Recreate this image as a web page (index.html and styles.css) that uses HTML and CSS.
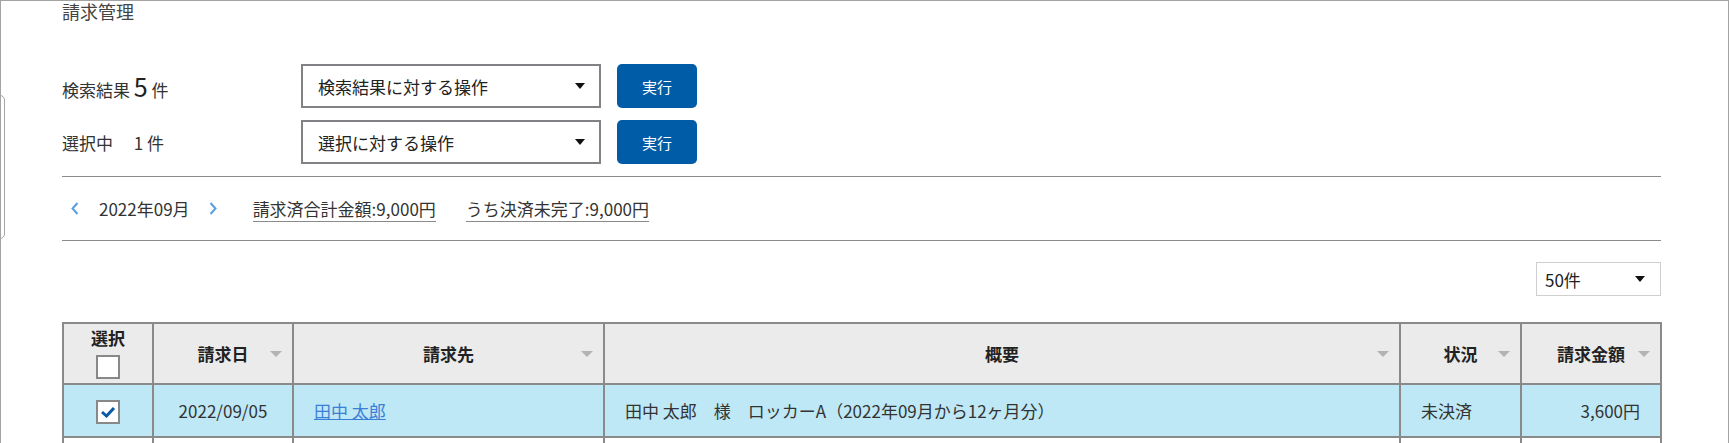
FILE: index.html
```html
<!DOCTYPE html>
<html lang="ja">
<head>
    <meta charset="UTF-8">
    <title>請求管理</title>
    <link rel="stylesheet" href="styles.css">
</head>
<body>
    <div class="frame">
        <div class="side-tab"></div>
        <div class="content">
            <h1 class="page-title">請求管理</h1>

            <div class="ops">
                <div class="op-row">
                    <div class="op-label">検索結果 <span class="count">5</span> 件</div>
                    <div class="op-select">
                        <span>検索結果に対する操作</span>
                        <span class="caret"></span>
                    </div>
                    <button class="btn">実行</button>
                </div>
                <div class="op-row">
                    <div class="op-label">選択中　 1 件</div>
                    <div class="op-select">
                        <span>選択に対する操作</span>
                        <span class="caret"></span>
                    </div>
                    <button class="btn">実行</button>
                </div>
            </div>

            <div class="summary">
                <svg class="chev" width="8" height="13" viewBox="0 0 8 13"><polyline points="6.5,1 1.5,6.5 6.5,12" fill="none" stroke="#5b9ee0" stroke-width="2"/></svg>
                <span class="month">2022年09月</span>
                <svg class="chev" width="8" height="13" viewBox="0 0 8 13"><polyline points="1.5,1 6.5,6.5 1.5,12" fill="none" stroke="#5b9ee0" stroke-width="2"/></svg>
                <span class="total first">請求済合計金額:9,000円</span>
                <span class="total">うち決済未完了:9,000円</span>
            </div>

            <div class="toolbar">
                <div class="per-page">
                    <span>50件</span>
                    <span class="caret"></span>
                </div>
            </div>

            <table class="bills">
                <colgroup>
                    <col style="width: 90px">
                    <col style="width: 140px">
                    <col style="width: 311px">
                    <col style="width: 796px">
                    <col style="width: 121px">
                    <col style="width: 140px">
                </colgroup>
                <thead>
                    <tr>
                        <th class="select-col">
                            <div>選択</div>
                            <span class="check"></span>
                        </th>
                        <th>請求日<span class="sort"></span></th>
                        <th>請求先<span class="sort"></span></th>
                        <th>概要<span class="sort"></span></th>
                        <th>状況<span class="sort"></span></th>
                        <th>請求金額<span class="sort"></span></th>
                    </tr>
                </thead>
                <tbody>
                    <tr class="selected">
                        <td class="center">
                            <span class="check">
                                <svg width="16" height="12" viewBox="0 0 16 12"><polyline points="2,6 6.5,10 14,2" fill="none" stroke="#0b5aa6" stroke-width="3"/></svg>
                            </span>
                        </td>
                        <td class="center">2022/09/05</td>
                        <td><a href="#" class="name-link">田中 太郎</a></td>
                        <td>田中 太郎　様　ロッカーA（2022年09月から12ヶ月分）</td>
                        <td>未決済</td>
                        <td class="amount">3,600円</td>
                    </tr>
                    <tr>
                        <td></td><td></td><td></td><td></td><td></td><td></td>
                    </tr>
                </tbody>
            </table>
        </div>
    </div>
</body>
</html>
```

FILE: styles.css
```css
html, body{
    margin: 0;
    padding: 0;
    overflow: hidden;
}
body{
    font-family: "Noto Sans CJK JP", "Noto Sans", sans-serif;
    color: #333;
    background: #fff;
}
.frame{
    position: relative;
    min-height: 100vh;
    box-sizing: border-box;
    border: 1px solid #a3a3a3;
    border-bottom: none;
}
.side-tab{
    position: absolute;
    left: -8px;
    top: 94px;
    width: 10px;
    height: 142px;
    border: 1px solid #a3a3a3;
    border-radius: 5px;
}
.content{
    padding: 0 67px 0 61px;
}
.page-title{
    margin: 0;
    font-size: 18px;
    font-weight: normal;
    line-height: 20px;
    color: #444;
}

.ops{
    margin-top: 43px;
    display: flex;
    flex-direction: column;
    gap: 12px;
    padding-bottom: 12px;
    border-bottom: 1px solid #8a8a8a;
}
.op-row{
    display: flex;
    align-items: center;
    height: 44px;
}
.op-label{
    width: 239px;
    font-size: 17px;
    color: #333;
}
.count{
    font-size: 25px;
    color: #222;
}
.op-select{
    width: 300px;
    height: 44px;
    box-sizing: border-box;
    border: 2px solid #808285;
    display: flex;
    align-items: center;
    justify-content: space-between;
    padding: 0 14px 0 15px;
    font-size: 17px;
    color: #222;
}
.caret{
    width: 0;
    height: 0;
    border-left: 5px solid transparent;
    border-right: 5px solid transparent;
    border-top: 6px solid #111;
}
.btn{
    margin-left: 16px;
    width: 80px;
    height: 44px;
    border: none;
    border-radius: 5px;
    background: #005ca6;
    color: #fff;
    font-family: inherit;
    font-size: 15px;
}

.summary{
    height: 63px;
    display: flex;
    align-items: center;
    border-bottom: 1px solid #8a8a8a;
    font-size: 17px;
    line-height: 20px;
    color: #333;

    .chev:first-child{
        margin-left: 9px;
    }
    .month{
        margin: 0 19px 0 20px;
    }
    .total{
        border-bottom: 1px solid #8a8a8a;
        padding-bottom: 2px;
        margin-top: 3px;
        margin-left: 30px;
    }
    .total.first{
        margin-left: 36px;
    }
}

.toolbar{
    display: flex;
    justify-content: flex-end;
    padding: 21px 0 26px;
}
.per-page{
    width: 125px;
    height: 34px;
    box-sizing: border-box;
    border: 1px solid #cfcfcf;
    display: flex;
    align-items: center;
    justify-content: space-between;
    padding: 0 15px 0 8px;
    font-size: 17px;
    color: #222;
}

.bills{
    width: 1599px;
    table-layout: fixed;
    border-collapse: collapse;
    font-size: 17px;

    th, td{
        border: 2px solid #8a8a8a;
    }
    th{
        position: relative;
        height: 59px;
        padding: 0;
        background: #ebebeb;
        font-weight: bold;
        color: #222;
        text-align: center;
        vertical-align: middle;
    }
    td{
        height: 51px;
        padding: 0 20px;
        color: #333;
    }
    .select-col div{
        line-height: 20px;
        margin-bottom: 3px;
    }
    .sort{
        position: absolute;
        right: 10px;
        top: 27px;
        width: 0;
        height: 0;
        border-left: 6px solid transparent;
        border-right: 6px solid transparent;
        border-top: 6px solid #b3b3b3;
    }
    tr.selected td{
        background: #bee8f5;
    }
    .center{
        text-align: center;
        padding: 0;
    }
    .amount{
        text-align: right;
    }
}
.check{
    display: inline-flex;
    align-items: center;
    justify-content: center;
    width: 24px;
    height: 24px;
    box-sizing: border-box;
    border: 2px solid #888;
    background: #fff;
    vertical-align: middle;
}
.name-link{
    color: #3a7fd6;
    text-decoration: underline;
}
```
